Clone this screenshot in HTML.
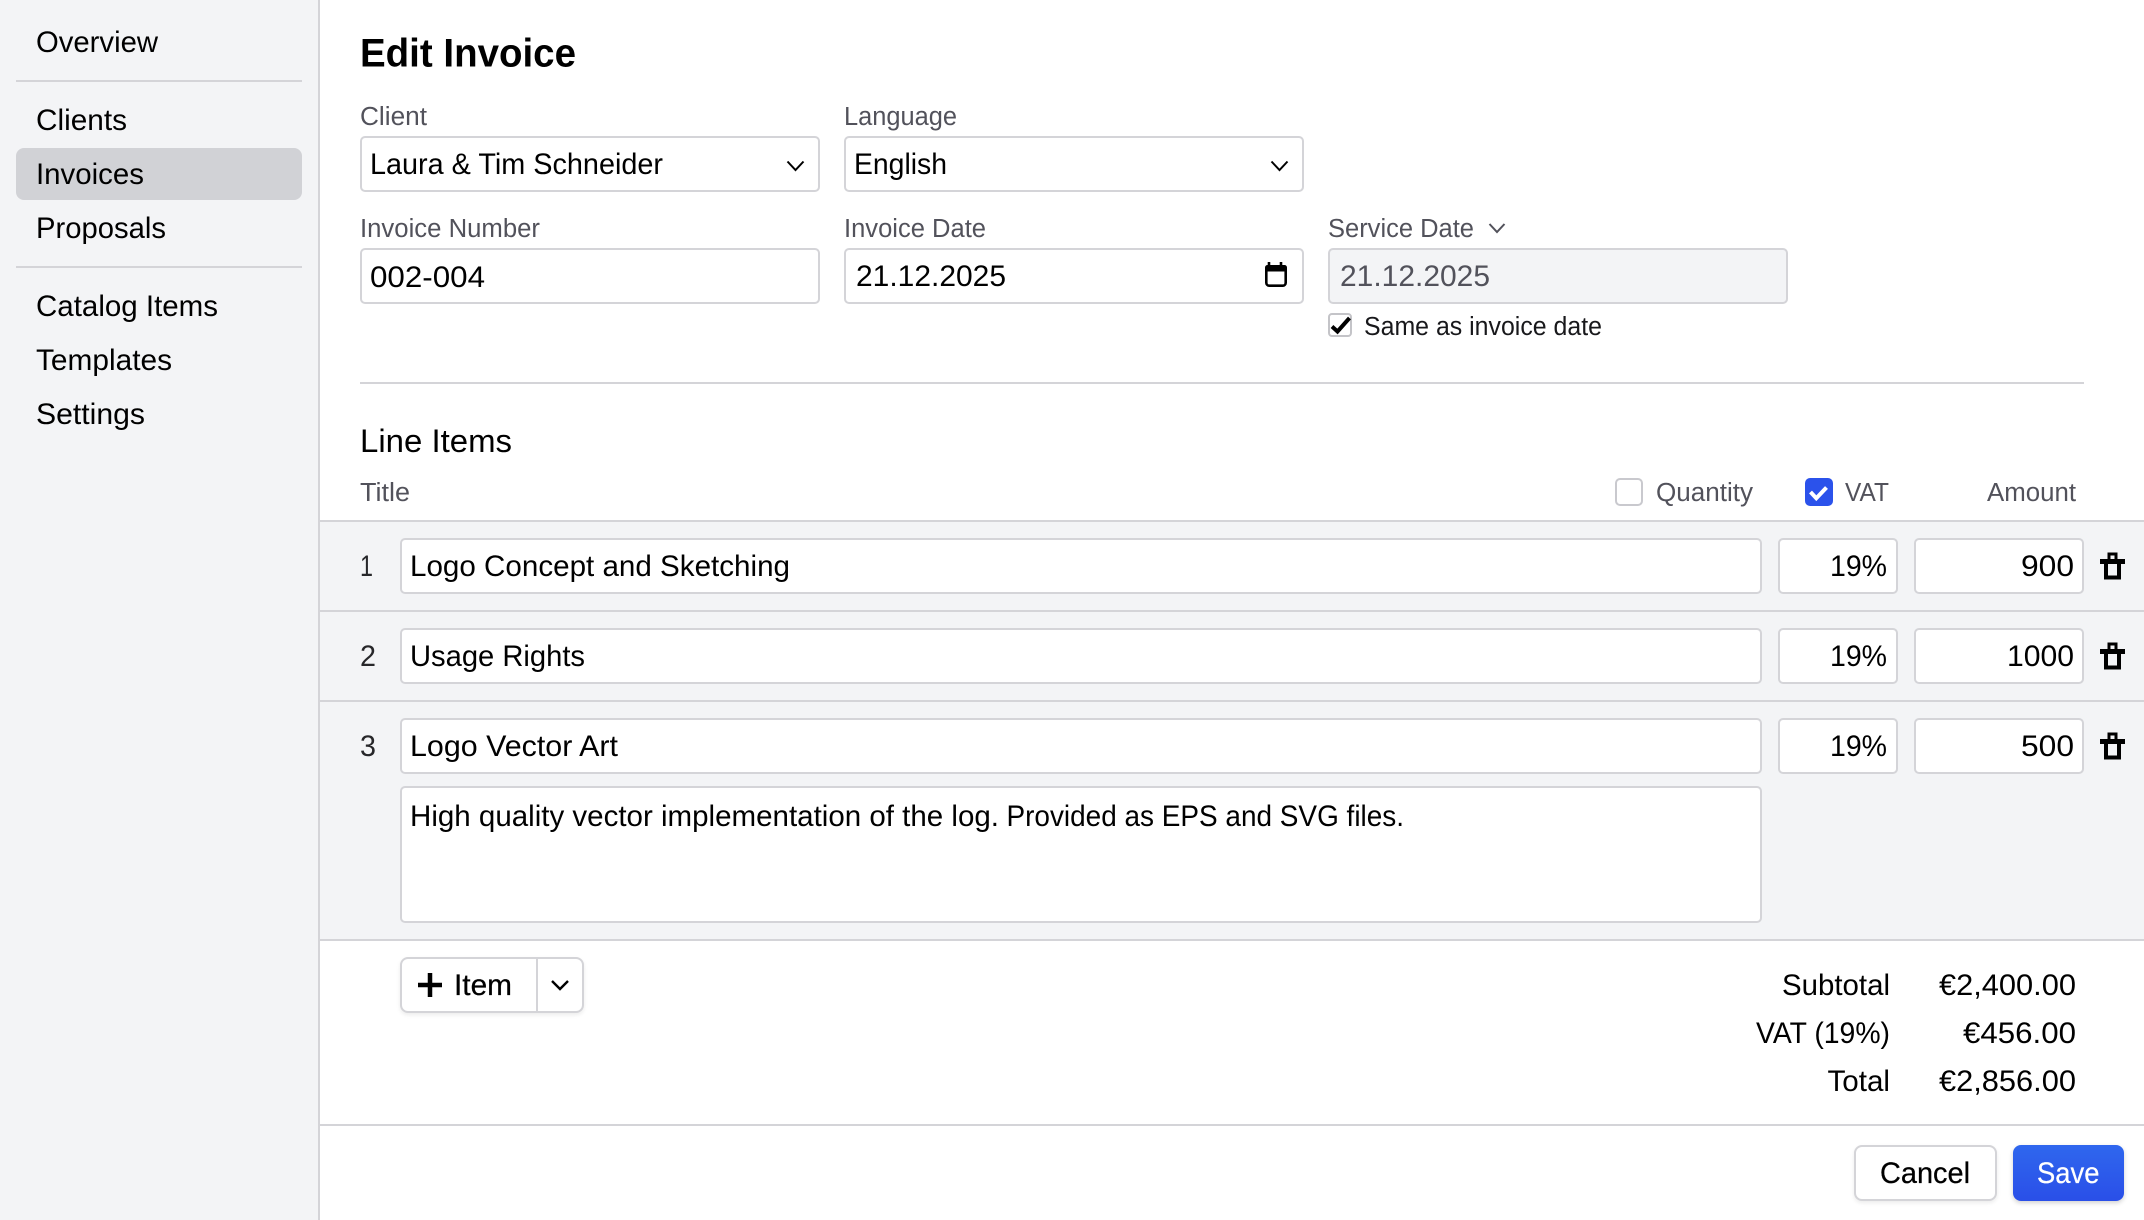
<!DOCTYPE html>
<html lang="en"><head><meta charset="utf-8"><title>Edit Invoice</title>
<style>
html,body{margin:0;padding:0;background:#fff}
#p{position:relative;width:2144px;height:1220px;overflow:hidden;background:#fff}
#p div{position:absolute;box-sizing:border-box}
.in{background:#fff;border:2px solid #d4d4d8;border-radius:5px}
.ln{background:#d4d4d8;height:2px}
svg{position:absolute;left:0;top:0}
text{font-family:"Liberation Sans",sans-serif;font-size:29.5px;fill:#000;white-space:pre}
.l{font-size:25.5px;fill:#52525b}
</style></head><body>
<div id="p">
<div style="left:0;top:0;width:320px;height:1220px;background:#f3f4f6;border-right:2px solid #d4d4d8"></div>
<div class="ln" style="left:16px;top:80px;width:286px"></div>
<div class="ln" style="left:16px;top:266px;width:286px"></div>
<div style="left:16px;top:148px;width:286px;height:52px;background:#d1d2d6;border-radius:8px"></div>

<div class="in" style="left:360px;top:136px;width:460px;height:56px"></div>
<div class="in" style="left:844px;top:136px;width:460px;height:56px"></div>
<div class="in" style="left:360px;top:248px;width:460px;height:56px"></div>
<div class="in" style="left:844px;top:248px;width:460px;height:56px"></div>
<div class="in" style="left:1328px;top:248px;width:460px;height:56px;background:#f3f4f6"></div>
<div class="in" style="left:1328px;top:313px;width:24px;height:24px;border-radius:4px;border-width:2.5px;border-color:#c4c4c8"></div>
<div class="ln" style="left:360px;top:382px;width:1724px"></div>

<div class="in" style="left:1615px;top:478px;width:28px;height:28px;border-radius:5px;border-color:#c9c9ce"></div>
<div style="left:1805px;top:478px;width:28px;height:28px;border-radius:5px;background:#2b52eb"></div>

<div style="left:320px;top:520px;width:1824px;height:421px;background:#f3f4f6"></div>
<div class="ln" style="left:320px;top:520px;width:1824px"></div>
<div class="ln" style="left:320px;top:610px;width:1824px"></div>
<div class="ln" style="left:320px;top:700px;width:1824px"></div>
<div class="ln" style="left:320px;top:939px;width:1824px"></div>
<div class="ln" style="left:320px;top:1124px;width:1824px"></div>

<div class="in" style="left:400px;top:538px;width:1362px;height:56px"></div>
<div class="in" style="left:1778px;top:538px;width:120px;height:56px"></div>
<div class="in" style="left:1914px;top:538px;width:170px;height:56px"></div>
<div class="in" style="left:400px;top:628px;width:1362px;height:56px"></div>
<div class="in" style="left:1778px;top:628px;width:120px;height:56px"></div>
<div class="in" style="left:1914px;top:628px;width:170px;height:56px"></div>
<div class="in" style="left:400px;top:718px;width:1362px;height:56px"></div>
<div class="in" style="left:1778px;top:718px;width:120px;height:56px"></div>
<div class="in" style="left:1914px;top:718px;width:170px;height:56px"></div>
<div class="in" style="left:400px;top:786px;width:1362px;height:137px"></div>

<div class="in" style="left:400px;top:957px;width:184px;height:56px;border-radius:8px;box-shadow:0 2px 4px rgba(0,0,0,.08)"></div>
<div style="left:536px;top:958px;width:2px;height:54px;background:#d4d4d8"></div>
<div class="in" style="left:1854px;top:1145px;width:143px;height:56px;border-radius:8px;box-shadow:0 2px 4px rgba(0,0,0,.08)"></div>
<div style="left:2013px;top:1145px;width:111px;height:56px;border-radius:8px;background:linear-gradient(#2f67ee,#2a4fe8);box-shadow:0 2px 5px rgba(0,0,0,.18)"></div>

<svg width="2144" height="1220" viewBox="0 0 2144 1220" xmlns="http://www.w3.org/2000/svg">
<g>
<text x="36" y="52" textLength="122" lengthAdjust="spacingAndGlyphs">Overview</text>
<text x="36" y="130" textLength="91" lengthAdjust="spacingAndGlyphs">Clients</text>
<text x="36" y="184" textLength="108" lengthAdjust="spacingAndGlyphs">Invoices</text>
<text x="36" y="238" textLength="130" lengthAdjust="spacingAndGlyphs">Proposals</text>
<text x="36" y="316" textLength="182" lengthAdjust="spacingAndGlyphs">Catalog Items</text>
<text x="36" y="370" textLength="136" lengthAdjust="spacingAndGlyphs">Templates</text>
<text x="36" y="424" textLength="109" lengthAdjust="spacingAndGlyphs">Settings</text>

<text x="360" y="66.5" textLength="216" lengthAdjust="spacingAndGlyphs" style="font-size:40px;font-weight:700">Edit Invoice</text>

<text class="l" x="360" y="125" textLength="67" lengthAdjust="spacingAndGlyphs">Client</text>
<text class="l" x="844" y="125" textLength="113" lengthAdjust="spacingAndGlyphs">Language</text>
<text class="l" x="360" y="237" textLength="180" lengthAdjust="spacingAndGlyphs">Invoice Number</text>
<text class="l" x="844" y="237" textLength="142" lengthAdjust="spacingAndGlyphs">Invoice Date</text>
<text class="l" x="1328" y="237" textLength="146" lengthAdjust="spacingAndGlyphs">Service Date</text>

<text x="370" y="174" textLength="293" lengthAdjust="spacingAndGlyphs">Laura &amp; Tim Schneider</text>
<text x="854" y="174" textLength="93" lengthAdjust="spacingAndGlyphs">English</text>
<text x="370" y="287" textLength="115" lengthAdjust="spacingAndGlyphs">002-004</text>
<text x="856" y="286" textLength="150" lengthAdjust="spacingAndGlyphs">21.12.2025</text>
<text x="1340" y="286" textLength="150" lengthAdjust="spacingAndGlyphs" style="fill:#52525b">21.12.2025</text>
<text x="1364" y="335" textLength="238" lengthAdjust="spacingAndGlyphs" style="font-size:25.5px;fill:#18181b">Same as invoice date</text>

<text x="360" y="452" textLength="152" lengthAdjust="spacingAndGlyphs" style="font-size:32px">Line Items</text>
<text class="l" x="360" y="501" textLength="50" lengthAdjust="spacingAndGlyphs">Title</text>
<text class="l" x="1656" y="501" textLength="97" lengthAdjust="spacingAndGlyphs">Quantity</text>
<text class="l" x="1845" y="501" textLength="44" lengthAdjust="spacingAndGlyphs">VAT</text>
<text class="l" x="1987" y="501" textLength="89" lengthAdjust="spacingAndGlyphs">Amount</text>

<text x="360" y="576" textLength="13" lengthAdjust="spacingAndGlyphs" style="fill:#27272a">1</text>
<text x="360" y="666" textLength="16" lengthAdjust="spacingAndGlyphs" style="fill:#27272a">2</text>
<text x="360" y="756" textLength="16" lengthAdjust="spacingAndGlyphs" style="fill:#27272a">3</text>

<text x="410" y="576" textLength="380" lengthAdjust="spacingAndGlyphs">Logo Concept and Sketching</text>
<text x="410" y="666" textLength="175" lengthAdjust="spacingAndGlyphs">Usage Rights</text>
<text x="410" y="756" textLength="208" lengthAdjust="spacingAndGlyphs">Logo Vector Art</text>
<text x="410" y="826" textLength="589" lengthAdjust="spacingAndGlyphs">High quality vector implementation of the log.</text>
<text x="1006.500" y="826" textLength="397.500" lengthAdjust="spacingAndGlyphs">Provided as EPS and SVG files.</text>

<text x="1830" y="576" textLength="57" lengthAdjust="spacingAndGlyphs">19%</text>
<text x="1830" y="666" textLength="57" lengthAdjust="spacingAndGlyphs">19%</text>
<text x="1830" y="756" textLength="57" lengthAdjust="spacingAndGlyphs">19%</text>
<text x="2021" y="576" textLength="53" lengthAdjust="spacingAndGlyphs">900</text>
<text x="2007" y="666" textLength="67" lengthAdjust="spacingAndGlyphs">1000</text>
<text x="2021" y="756" textLength="53" lengthAdjust="spacingAndGlyphs">500</text>

<text x="454" y="995" textLength="58" lengthAdjust="spacingAndGlyphs" style="stroke:#000;stroke-width:.25px">Item</text>
<text x="1782" y="995" textLength="108" lengthAdjust="spacingAndGlyphs">Subtotal</text>
<text x="1756" y="1043" textLength="134" lengthAdjust="spacingAndGlyphs">VAT (19%)</text>
<text x="1827.500" y="1091" textLength="62.500" lengthAdjust="spacingAndGlyphs">Total</text>
<text x="1939" y="995" textLength="137" lengthAdjust="spacingAndGlyphs">€2,400.00</text>
<text x="1963" y="1043" textLength="113" lengthAdjust="spacingAndGlyphs">€456.00</text>
<text x="1939" y="1091" textLength="137" lengthAdjust="spacingAndGlyphs">€2,856.00</text>
<text x="1880" y="1183" textLength="90" lengthAdjust="spacingAndGlyphs" style="stroke:#000;stroke-width:.25px">Cancel</text>
<text x="2037" y="1183" textLength="62.500" lengthAdjust="spacingAndGlyphs" style="fill:#fff;stroke:#fff;stroke-width:.2px">Save</text>
</g>
<g fill="none" stroke="#000" stroke-width="2">
<path d="M787.500 161.500l8 8.500 8-8.500"/>
<path d="M1271.500 161.500l8 8.500 8-8.500"/>
<path d="M1489.500 224l7.500 8 7.500-8" stroke="#52525b"/>
<path d="M552 981l8 8 8-8" stroke-width="2.400"/>
<path d="M1332 326.500l5.500 5 12-13.500" stroke-width="4"/>
<path d="M1810.500 492l5.800 6.200 10.200-10.700" stroke="#fff" stroke-width="4"/>
<path d="M430 973v24M418 985h24" stroke-width="4.500"/>
<rect x="1266.300" y="266.300" width="19.400" height="19.400" rx="3" stroke-width="2.600"/>
<path d="M1269 262v4M1281 262v4" stroke-width="2.600"/>
</g>
<rect x="1265" y="265" width="22" height="6.500" rx="2.500" fill="#000"/>
<g fill="#000">
<path fill-rule="evenodd" d="M2107.500 552.500h10v6.500h7.500v5h-4v15.500h-17v-15.500h-4v-5h7.500zM2110.500 555.500v3.500h4v-3.500zM2108 564v11.500h9v-11.500z"/>
<path fill-rule="evenodd" d="M2107.500 642.500h10v6.500h7.500v5h-4v15.500h-17v-15.500h-4v-5h7.500zM2110.500 645.500v3.500h4v-3.500zM2108 654v11.500h9v-11.500z"/>
<path fill-rule="evenodd" d="M2107.500 732.500h10v6.500h7.500v5h-4v15.500h-17v-15.500h-4v-5h7.500zM2110.500 735.500v3.500h4v-3.500zM2108 744v11.500h9v-11.500z"/>
</g>
</svg>
</div>
</body></html>
